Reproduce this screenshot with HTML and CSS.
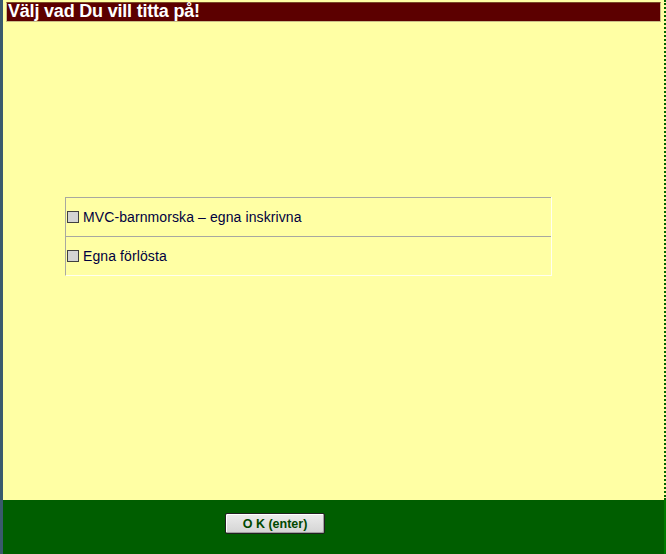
FILE: index.html
```html
<!DOCTYPE html>
<html>
<head>
<meta charset="utf-8">
<link rel="stylesheet" href="styles.css">
</head>
<body>
<div class="frame">
  <div class="main">
    <div class="content">
      <h1 class="title">Välj vad Du vill titta på!</h1>
      <table class="choices">
        <tr><td><label class="opt"><span class="box"></span>MVC-barnmorska – egna inskrivna</label></td></tr>
        <tr><td><label class="opt"><span class="box"></span>Egna förlösta</label></td></tr>
      </table>
    </div>
    <div class="footer">
      <button class="ok">O K (enter)</button>
    </div>
  </div>
</div>
</body>
</html>
```

FILE: styles.css
```css
html, body {
  margin: 0;
  padding: 0;
  height: 100%;
}
body {
  background: #3a5a6c;
  font-family: "Liberation Sans", Arial, sans-serif;
}
.frame {
  display: flex;
  height: 554px;
  padding-left: 3px;
}
.main {
  flex: 1;
  display: flex;
  flex-direction: column;
}
.content {
  height: 500px;
  background: #ffffa4;
  border-right: 2px dotted #006000;
  padding: 2px 3px 0 3px;
  box-sizing: border-box;
}
.title {
  margin: 0;
  height: 20px;
  box-sizing: border-box;
  background: #5c0000;
  border: 1px solid #c9bd86;
  border-top-color: #7a4a2a;
  color: #ffffff;
  font-size: 18px;
  font-weight: bold;
  line-height: 17px;
  padding-left: 1px;
  letter-spacing: -0.2px;
}
.choices {
  margin: 175px 0 0 59px;
  width: 487px;
  border-collapse: separate;
  border-spacing: 0;
  border-left: 1px solid #a8a8a0;
  border-right: 1px solid #fffff0;
  border-bottom: 1px solid #fffff0;
}
.choices td {
  height: 38px;
  padding: 0 0 0 1px;
  border-top: 1px solid #a8a8a0;
  font-size: 14px;
  letter-spacing: 0.1px;
  color: #000040;
  vertical-align: middle;
}
.opt {
  display: flex;
  align-items: center;
  gap: 4px;
}
.box {
  width: 10px;
  height: 10px;
  border: 1px solid #404040;
  background: #d4d4d4;
  display: inline-block;
}
.footer {
  flex: 1;
  background: #005e00;
  border-right: 2px solid #007a00;
  padding: 13px 0 0 222px;
  box-sizing: border-box;
}
.ok {
  width: 100px;
  height: 21px;
  margin: 0;
  padding: 0;
  border: 1px solid #202020;
  border-radius: 2px;
  background: linear-gradient(#ececec, #d4d4d4);
  box-shadow: inset -1px -1px 0 #a0a0a0, inset 1px 1px 0 #ffffff;
  color: #004800;
  font-family: "Liberation Sans", Arial, sans-serif;
  font-size: 12.5px;
  font-weight: bold;
}
```
